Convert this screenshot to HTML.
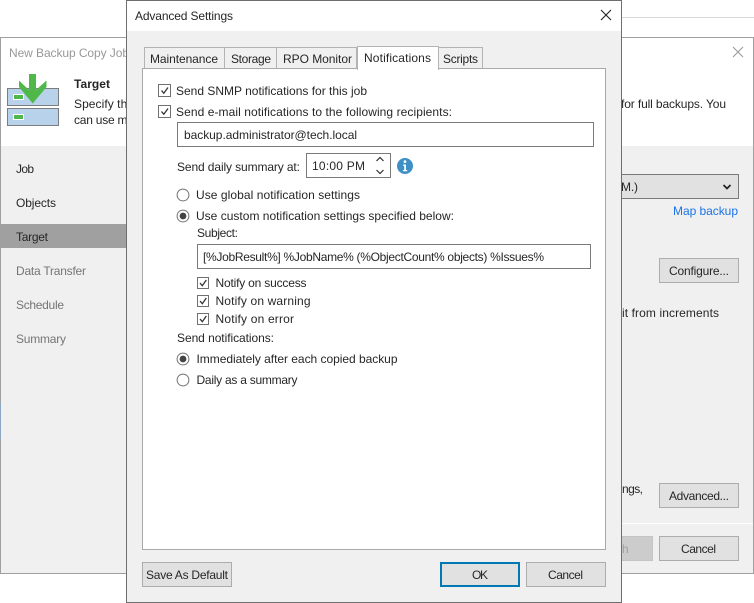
<!DOCTYPE html>
<html><head><meta charset="utf-8"><title>Advanced Settings</title>
<style>
html,body{margin:0;padding:0;background:#fff;width:754px;height:603px;overflow:hidden}
svg{display:block}
text{font-family:"Liberation Sans",sans-serif;font-size:12px;fill:#262626;white-space:pre}
rect{shape-rendering:crispEdges}
.btn{fill:#e1e1e1;stroke:#adadad}
.box{fill:#fff;stroke:#7a7a7a}
.ck{fill:none;stroke:#333;stroke-width:1.3}
.cb{fill:#fff;stroke:#707070}
.tab{fill:#f0f0f0;stroke:#b4b4b4}
</style></head><body>
<svg width="754" height="603" viewBox="0 0 754 603" xmlns="http://www.w3.org/2000/svg">
<rect x="0" y="0" width="754" height="603" fill="#fff"/>
<rect x="621" y="17" width="133" height="1" fill="#d9d9d9"/>

<!-- background wizard -->
<rect x="0.500" y="37.500" width="753" height="536" fill="#f0f0f0" stroke="#a0a0a0"/>
<rect x="1" y="38" width="752" height="108" fill="#fff"/>
<rect x="0" y="403" width="1" height="36" fill="#8aa8c4"/>
<text x="9" y="57" style="fill:#989898" textLength="120">New Backup Copy Job</text>
<g stroke="#9a9a9a" stroke-width="1.100" fill="none"><path d="M733 47 L743 57 M743 47 L733 57"/></g>

<rect x="7.500" y="88.500" width="51" height="17" fill="#b7d2ea" stroke="#7d7d7d"/>
<rect x="7.500" y="108.500" width="51" height="17" fill="#b7d2ea" stroke="#7d7d7d"/>
<rect x="13.500" y="94.500" width="10" height="5" fill="#4fb848" stroke="#fff"/>
<rect x="13.500" y="114.500" width="10" height="5" fill="#4fb848" stroke="#fff"/>
<path d="M29 74 H36 V90 L46.500 80.500 V87 L32.700 103.500 L19 87 V80.500 L29 90 Z" fill="#4fb848"/>

<text x="74" y="88" style="font-weight:bold" textLength="36">Target</text>
<text x="74" y="108" textLength="60">Specify the</text>
<text x="74" y="124" textLength="60">can use ma</text>
<text x="621" y="108" textLength="105">for full backups. You</text>

<text x="16" y="173" textLength="18">Job</text>
<text x="16" y="207" textLength="40">Objects</text>
<rect x="1" y="224" width="125" height="24" fill="#a0a0a0"/>
<text x="16" y="241" textLength="32">Target</text>
<text x="16" y="275" textLength="70" style="fill:#757575">Data Transfer</text>
<text x="16" y="309" textLength="48" style="fill:#757575">Schedule</text>
<text x="16" y="343" textLength="50" style="fill:#757575">Summary</text>

<rect x="600.500" y="174.500" width="138" height="24" fill="#e1e1e1" stroke="#7a7a7a"/>
<text x="621" y="191" textLength="17">M.)</text>
<path d="M723.500 185 L727 188.500 L730.500 185" fill="none" stroke="#222" stroke-width="1.700"/>
<text x="673" y="215" textLength="65" style="fill:#1a73e8">Map backup</text>
<rect class="btn" x="659.500" y="258.500" width="79" height="24"/>
<text x="669" y="275" textLength="60">Configure...</text>
<text x="622" y="317" textLength="97">it from increments</text>
<text x="622" y="493" textLength="21">ngs,</text>
<rect class="btn" x="659.500" y="483.500" width="79" height="24"/>
<text x="669" y="500" textLength="60">Advanced...</text>
<rect x="621" y="523" width="132" height="1" fill="#fff"/>
<rect x="600.500" y="536.500" width="52" height="24" fill="#cccccc" stroke="#c4c4c4"/>
<text x="622" y="553" style="fill:#a0a0a0">h</text>
<rect class="btn" x="659.500" y="536.500" width="79" height="24"/>
<text x="681" y="553" textLength="35">Cancel</text>

<!-- dialog -->
<rect x="126.500" y="0.500" width="495" height="602" fill="#f0f0f0" stroke="#6e6e6e"/>
<rect x="127" y="1" width="494" height="30" fill="#fff"/>
<text x="135" y="20" textLength="98">Advanced Settings</text>
<path d="M601 10 L611 20 M611 10 L601 20" fill="none" stroke="#222" stroke-width="1.100"/>

<!-- tabs -->
<rect class="tab" x="144.500" y="47.500" width="80" height="22"/>
<rect class="tab" x="224.500" y="47.500" width="52" height="22"/>
<rect class="tab" x="276.500" y="47.500" width="80" height="22"/>
<rect class="tab" x="438.500" y="47.500" width="44" height="22"/>
<rect x="142.500" y="68.500" width="463" height="481" fill="#fff" stroke="#a9a9a9"/>
<rect x="357.500" y="46.500" width="81" height="23" fill="#fff" stroke="#b4b4b4"/>
<rect x="358" y="66" width="80" height="4" fill="#fff"/>
<text x="150" y="63" textLength="68">Maintenance</text>
<text x="231" y="63" textLength="40">Storage</text>
<text x="283" y="63" textLength="69">RPO Monitor</text>
<text x="364" y="62" textLength="67">Notifications</text>
<text x="443" y="63" textLength="35">Scripts</text>

<!-- checkboxes -->
<rect class="cb" x="158.500" y="84.500" width="12" height="12"/>
<path class="ck" d="M161.500 90.500 L163.800 93.200 L168 87.500"/>
<text x="176" y="95" textLength="191">Send SNMP notifications for this job</text>
<rect class="cb" x="158.500" y="105.500" width="12" height="12"/>
<path class="ck" d="M161.500 111.500 L163.800 114.200 L168 108.500"/>
<text x="176" y="116" textLength="276">Send e-mail notifications to the following recipients:</text>

<rect class="box" x="177.500" y="122.500" width="416" height="24"/>
<text x="184" y="139" textLength="173">backup.administrator@tech.local</text>

<text x="177" y="171" textLength="123">Send daily summary at:</text>
<rect class="box" x="306.500" y="153.500" width="84" height="24"/>
<text x="312" y="170" textLength="53">10:00 PM</text>
<path d="M376.500 161 L380 157.500 L383.500 161 M376.500 170 L380 173.500 L383.500 170" fill="none" stroke="#333" stroke-width="1.200"/>
<circle cx="405" cy="166" r="8" fill="#3e8fc6"/>
<circle cx="405" cy="161.600" r="1.400" fill="#fff"/>
<path d="M403 164.500 H406 V170 H407.200 V171.300 H403 V170 H404.200 V165.800 H403 Z" fill="#fff"/>

<circle cx="183" cy="195" r="5.900" fill="#fff" stroke="#707070"/>
<text x="196" y="199" textLength="164">Use global notification settings</text>
<circle cx="183" cy="216" r="5.900" fill="#fff" stroke="#707070"/>
<circle cx="183" cy="216" r="3.400" fill="#444"/>
<text x="196" y="220" textLength="258">Use custom notification settings specified below:</text>
<text x="197" y="237" textLength="41">Subject:</text>
<rect class="box" x="197.500" y="244.500" width="393" height="24"/>
<text x="203" y="261" textLength="341">[%JobResult%] %JobName% (%ObjectCount% objects) %Issues%</text>

<rect class="cb" x="197.500" y="277.500" width="11" height="11"/>
<path class="ck" d="M200 283 L202.300 285.700 L206.300 280"/>
<text x="215.500" y="287" textLength="91">Notify on success</text>
<rect class="cb" x="197.500" y="295.500" width="11" height="11"/>
<path class="ck" d="M200 301 L202.300 303.700 L206.300 298"/>
<text x="215.500" y="305" textLength="95">Notify on warning</text>
<rect class="cb" x="197.500" y="313.500" width="11" height="11"/>
<path class="ck" d="M200 319 L202.300 321.700 L206.300 316"/>
<text x="215.500" y="323" textLength="78.500">Notify on error</text>

<text x="177" y="342" textLength="97">Send notifications:</text>
<circle cx="183" cy="359" r="5.900" fill="#fff" stroke="#707070"/>
<circle cx="183" cy="359" r="3.400" fill="#444"/>
<text x="196.500" y="363" textLength="201">Immediately after each copied backup</text>
<circle cx="183" cy="380" r="5.900" fill="#fff" stroke="#707070"/>
<text x="196.500" y="384" textLength="101">Daily as a summary</text>

<!-- footer buttons -->
<rect class="btn" x="142.500" y="562.500" width="89" height="24"/>
<text x="146" y="579" textLength="82">Save As Default</text>
<rect x="441" y="563" width="78" height="23" fill="#e1e1e1" stroke="#0078b4" stroke-width="2"/>
<text x="472" y="579" textLength="16">OK</text>
<rect class="btn" x="526.500" y="562.500" width="79" height="24"/>
<text x="548" y="579" textLength="35">Cancel</text>
</svg>
</body></html>
